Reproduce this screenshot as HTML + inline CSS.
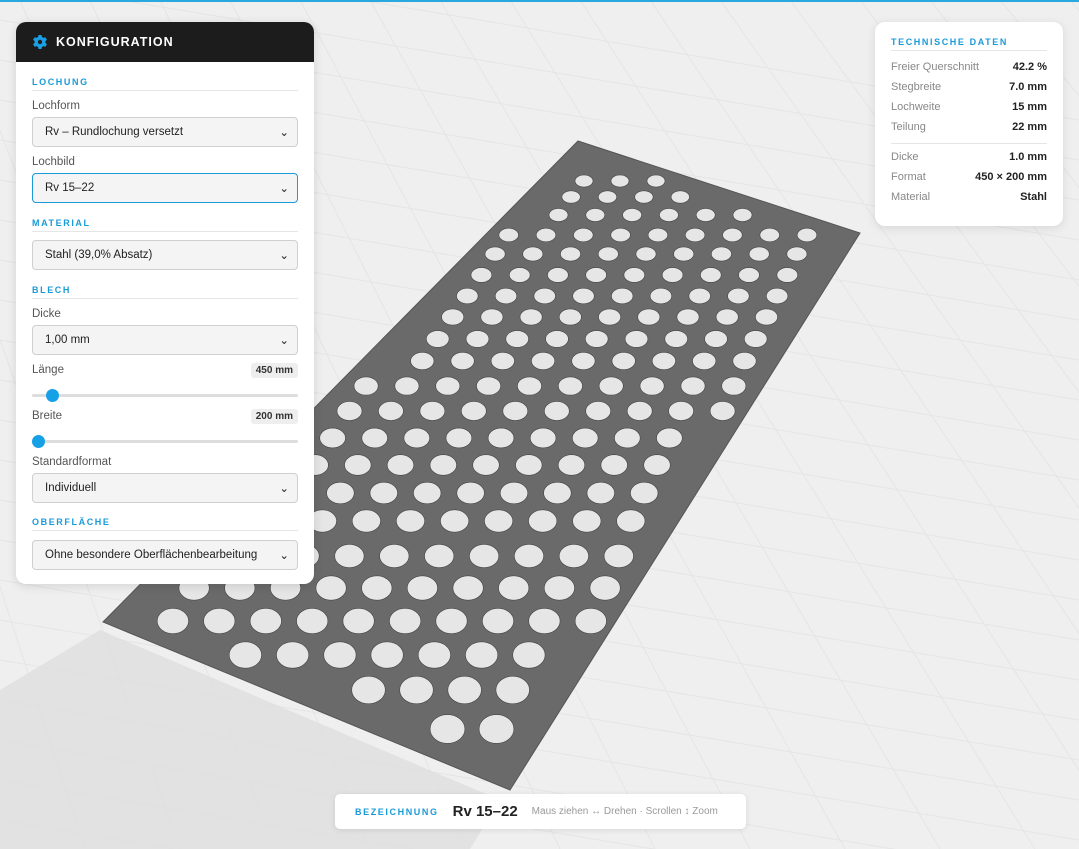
<!DOCTYPE html>
<html><head><meta charset="utf-8"><style>
*{box-sizing:border-box;margin:0;padding:0}
body{width:1079px;height:849px;overflow:hidden;background:#efefef;font-family:"Liberation Sans",sans-serif;position:relative}
#bg{position:absolute;left:0;top:0}
.topline{position:absolute;left:0;top:0;width:1079px;height:2px;background:#29a8e0}
.panel{position:absolute;left:16px;top:22px;width:298px;height:562px;background:#fff;border-radius:10px;box-shadow:0 2px 10px rgba(0,0,0,.12);overflow:hidden}
.ph{height:40px;background:#1c1c1c;color:#fff;font-weight:bold;font-size:12.5px;letter-spacing:1px;display:flex;align-items:center;padding-left:17px}
.ph svg{margin-right:9px}
.a{position:absolute;left:16px;width:266px}
.sec{color:#1a9ad8;font-size:9px;font-weight:bold;letter-spacing:1.6px;border-bottom:1px solid #e6e6e6;height:14px;line-height:10px}
.lab{font-size:11.5px;color:#555;display:flex;justify-content:space-between;align-items:center;height:14px}
.sel{height:30px;border:1px solid #cfcfcf;border-radius:4px;background:#f4f4f4;font-size:11.5px;color:#222;display:flex;align-items:center;justify-content:space-between;padding:0 8px 0 12px}
.sel.f{border-color:#1a9ad8}
.badge{background:#eee;border-radius:3px;font-size:10px;font-weight:bold;color:#333;padding:2px 5px}
.track{height:3px;background:#ddd;border-radius:2px}
.thumb{position:absolute;top:-5px;width:13px;height:13px;border-radius:50%;background:#16a0e6}
.tech{position:absolute;left:875px;top:22px;width:188px;height:204px;background:#fff;border-radius:10px;box-shadow:0 2px 10px rgba(0,0,0,.1);padding:15px 16px}
.row{display:flex;justify-content:space-between;font-size:11px;height:20px;align-items:center}
.row span:first-child{color:#888}.row span:last-child{color:#222;font-weight:bold}
.bar{position:absolute;left:335px;top:794px;width:411px;height:35px;background:#fff;border-radius:5px;box-shadow:0 1px 6px rgba(0,0,0,.1);display:flex;align-items:center;padding-left:20px}
</style></head><body>
<svg id="bg" width="1079" height="849"></svg>
<div class="topline"></div>
<div class="panel">
<div class="ph"><svg width="14" height="14" viewBox="0 0 14 14"><path fill="#1aa0e6" d="M5.5 0h3l.4 2 1.6.9 1.9-.7 1.5 2.6-1.5 1.3v1.8l1.5 1.3-1.5 2.6-1.9-.7-1.6.9-.4 2h-3l-.4-2-1.6-.9-1.9.7L.1 9.2 1.6 7.9V6.1L.1 4.8l1.5-2.6 1.9.7 1.6-.9z"/><circle cx="7" cy="7" r="2.2" fill="#1c1c1c"/></svg>KONFIGURATION</div>
<div class="a sec" style="top:55px">LOCHUNG</div>
<div class="a lab" style="top:77px">Lochform</div>
<div class="a sel" style="top:95px">Rv – Rundlochung versetzt<span>⌄</span></div>
<div class="a lab" style="top:133px">Lochbild</div>
<div class="a sel f" style="top:151px">Rv 15–22<span>⌄</span></div>
<div class="a sec" style="top:196px">MATERIAL</div>
<div class="a sel" style="top:218px">Stahl (39,0% Absatz)<span>⌄</span></div>
<div class="a sec" style="top:263px">BLECH</div>
<div class="a lab" style="top:285px">Dicke</div>
<div class="a sel" style="top:303px">1,00 mm<span>⌄</span></div>
<div class="a lab" style="top:341px">Länge<span class="badge">450 mm</span></div>
<div class="a track" style="top:372px"><div class="thumb" style="left:14px"></div></div>
<div class="a lab" style="top:387px">Breite<span class="badge">200 mm</span></div>
<div class="a track" style="top:418px"><div class="thumb" style="left:0"></div></div>
<div class="a lab" style="top:433px">Standardformat</div>
<div class="a sel" style="top:451px">Individuell<span>⌄</span></div>
<div class="a sec" style="top:495px">OBERFLÄCHE</div>
<div class="a sel" style="top:518px">Ohne besondere Oberflächenbearbeitung<span>⌄</span></div>
</div>
<div class="tech">
<div class="sec" style="margin:0 0 6px">TECHNISCHE DATEN</div>
<div class="row"><span>Freier Querschnitt</span><span>42.2 %</span></div>
<div class="row"><span>Stegbreite</span><span>7.0 mm</span></div>
<div class="row"><span>Lochweite</span><span>15 mm</span></div>
<div class="row"><span>Teilung</span><span>22 mm</span></div>
<div style="border-top:1px solid #e6e6e6;margin:6px 0 3px"></div>
<div class="row"><span>Dicke</span><span>1.0 mm</span></div>
<div class="row"><span>Format</span><span>450 × 200 mm</span></div>
<div class="row"><span>Material</span><span>Stahl</span></div>
</div>
<div class="bar"><span style="color:#1a9ad8;font-size:9px;font-weight:bold;letter-spacing:1.6px">BEZEICHNUNG</span><span style="font-size:15px;font-weight:bold;color:#222;margin-left:14px">Rv 15–22</span><span style="font-size:10px;color:#999;margin-left:14px">Maus ziehen ↔ Drehen · Scrollen ↕ Zoom</span></div>
<script>
var s=document.getElementById('bg'),h='';
for(var i=-20;i<40;i++){h+='<line x1="'+(i*70-400)+'" y1="0" x2="'+(i*95-200)+'" y2="849" stroke="#e5e5e5"/>';}
for(var j=0;j<30;j++){var y=j*40;h+='<line x1="0" y1="'+(y-60)+'" x2="1079" y2="'+(y+120)+'" stroke="#e5e5e5"/>';}
h+='<polygon points="0,690 100,630 500,800 470,849 0,849" fill="#dedede" opacity=".8"/>';
var P=[[578,141],[860,233],[510,790],[103,622]];
h+='<polygon points="'+P.map(function(p){return p.join(',')}).join(' ')+'" fill="#6a6a6a" stroke="#555"/>';
function inside(x,y,m){for(var k=0;k<4;k++){var a=P[k],b=P[(k+1)%4];var dx=b[0]-a[0],dy=b[1]-a[1],L=Math.hypot(dx,dy);var c=((x-a[0])*dy-(y-a[1])*dx)/L;if(c>-m)return false;}return true;}
var ys=[181,197,215,235,254,275,296,317,339,361,386,411,438,465,493,521,556,588,621,655,690,729,770];
ys.forEach(function(y,i){var t=(y-181)/590,sp=36+t*14,r=9+t*9,ry=6+t*9,off=(i%2)*sp/2;
for(var x=80+off;x<880;x+=sp){if(inside(x,y,r+4))h+='<ellipse cx="'+x.toFixed(1)+'" cy="'+y+'" rx="'+r.toFixed(1)+'" ry="'+ry.toFixed(1)+'" fill="#e6e6e6" stroke="#444" stroke-width=".6"/>';}});
s.innerHTML=h;
</script>
</body></html>
